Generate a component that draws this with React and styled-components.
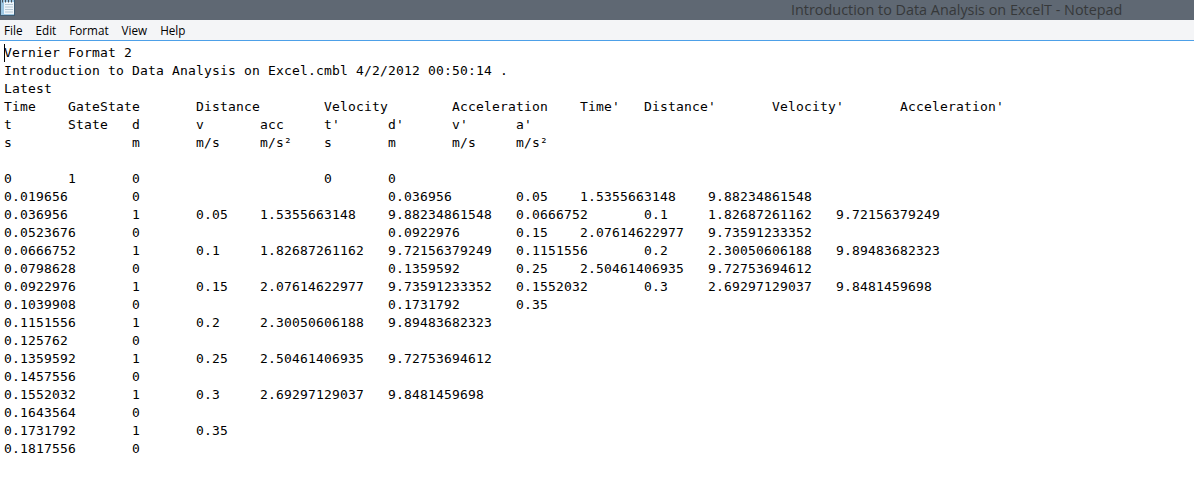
import React from "react";
import styled, { createGlobalStyle } from "styled-components";

const Global = createGlobalStyle`
  html, body { margin: 0; padding: 0; background: #fff; overflow: hidden; }
`;
const Win = styled.div`
  width: 1194px; height: 495px; display: flex; flex-direction: column; background: #fff; overflow: hidden;
`;
const TitleBar = styled.div`
  height: 20px; flex: none; background: #5f6873; display: flex; align-items: center;
  font-family: "Open Sans", sans-serif; font-size: 14.4px; color: #36383a;
`;
const IconBox = styled.svg`
  width: 15px; height: 17px; flex: none; align-self: flex-start;
`;
const Title = styled.div`
  margin-left: 776px; white-space: pre; line-height: 18px;
`;
const MenuBar = styled.div`
  height: 20px; flex: none; background: #f4f5f7; border-bottom: 1px solid #4da0e8;
  display: flex; align-items: center; padding-left: 4px; gap: 13px;
  font-family: "Open Sans", sans-serif; font-size: 11.7px; color: #000;
`;
const MenuItem = styled.span`line-height: 20px;`;
const Editor = styled.div`
  flex: 1; padding: 3px 0 0 4px; position: relative;
`;
const Caret = styled.div`
  position: absolute; left: 4px; top: 3px; width: 1px; height: 18px; background: #000;
`;
const Text = styled.pre`
  margin: 0; font-family: "DejaVu Sans Mono", monospace; font-size: 13px; letter-spacing: 0.174px;
  line-height: 18px; tab-size: 8; color: #000; white-space: pre;
`;

const content = [
  "Vernier Format 2",
  "Introduction to Data Analysis on Excel.cmbl 4/2/2012 00:50:14 .",
  "Latest",
  "Time\tGateState\tDistance\tVelocity\tAcceleration\tTime'\tDistance'\tVelocity'\tAcceleration'",
  "t\tState\td\tv\tacc\tt'\td'\tv'\ta'",
  "s\t\tm\tm/s\tm/s²\ts\tm\tm/s\tm/s²",
  "",
  "0\t1\t0\t\t\t0\t0",
  "0.019656\t0\t\t\t\t0.036956\t0.05\t1.5355663148\t9.88234861548",
  "0.036956\t1\t0.05\t1.5355663148\t9.88234861548\t0.0666752\t0.1\t1.82687261162\t9.72156379249",
  "0.0523676\t0\t\t\t\t0.0922976\t0.15\t2.07614622977\t9.73591233352",
  "0.0666752\t1\t0.1\t1.82687261162\t9.72156379249\t0.1151556\t0.2\t2.30050606188\t9.89483682323",
  "0.0798628\t0\t\t\t\t0.1359592\t0.25\t2.50461406935\t9.72753694612",
  "0.0922976\t1\t0.15\t2.07614622977\t9.73591233352\t0.1552032\t0.3\t2.69297129037\t9.8481459698",
  "0.1039908\t0\t\t\t\t0.1731792\t0.35",
  "0.1151556\t1\t0.2\t2.30050606188\t9.89483682323",
  "0.125762\t0",
  "0.1359592\t1\t0.25\t2.50461406935\t9.72753694612",
  "0.1457556\t0",
  "0.1552032\t1\t0.3\t2.69297129037\t9.8481459698",
  "0.1643564\t0",
  "0.1731792\t1\t0.35",
  "0.1817556\t0",
].join("\n");

const NotepadIcon = () => (
  <IconBox viewBox="0 0 15 17">
    <rect x="0" y="0" width="15" height="16" fill="#3f5a70" />
    <rect x="1" y="0" width="13" height="15" fill="#9cc6e2" />
    <rect x="4" y="2" width="10" height="12" fill="#eef5fa" />
    <path d="M5 4.5h8M5 7h8M5 9.5h8M5 12h8" stroke="#b3c6d3" strokeWidth="1" />
    <path d="M2.5 0v2.5M5.5 0v2.5M8.5 0v2.5M11.5 0v2.5" stroke="#46505a" strokeWidth="1" />
  </IconBox>
);

export default function App() {
  return (
    <Win>
      <Global />
      <TitleBar>
        <NotepadIcon />
        <Title>Introduction to Data Analysis on ExcelT - Notepad</Title>
      </TitleBar>
      <MenuBar>
        {["File", "Edit", "Format", "View", "Help"].map((m) => (
          <MenuItem key={m}>{m}</MenuItem>
        ))}
      </MenuBar>
      <Editor>
        <Caret />
        <Text>{content}</Text>
      </Editor>
    </Win>
  );
}
